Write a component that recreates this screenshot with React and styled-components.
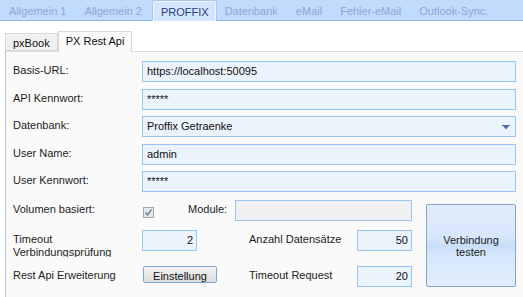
import React from "react";
import styled, { createGlobalStyle } from "styled-components";

const GlobalStyle = createGlobalStyle`
  html, body {
    margin: 0;
    padding: 0;
    background: #ffffff;
  }
  body {
    font-family: "Liberation Sans", Arial, sans-serif;
    font-size: 11px;
    color: #1c1c1c;
  }
`;

const topTabs = [
  "Allgemein 1",
  "Allgemein 2",
  "PROFFIX",
  "Datenbank",
  "eMail",
  "Fehler-eMail",
  "Outlook-Sync.",
];

const fields = [
  { label: "Basis-URL:", value: "https://localhost:50095" },
  { label: "API Kennwort:", value: "*****" },
  { label: "Datenbank:", value: "Proffix Getraenke", combo: true },
  { label: "User Name:", value: "admin" },
  { label: "User Kennwort:", value: "*****" },
];

const App = () => {
  return (
    <Window>
      <GlobalStyle />
      <TopTabBar>
        {topTabs.map((t) => (
          <TopTab key={t} $active={t === "PROFFIX"}>
            {t}
          </TopTab>
        ))}
      </TopTabBar>
      <OuterPage>
        <SubTabBar>
          <SubTab>pxBook</SubTab>
          <SubTab $active>PX Rest Api</SubTab>
        </SubTabBar>
        <Panel>
          <FieldList>
            {fields.map((f) => (
              <FieldRow key={f.label}>
                <Label>{f.label}</Label>
                <TextBox>
                  {f.value}
                  {f.combo && (
                    <ComboArrow width="8" height="5" viewBox="0 0 8 5">
                      <path d="M0 0h8v1H7L4 4.5 1 1H0z" fill="#4d6fa6" />
                    </ComboArrow>
                  )}
                </TextBox>
              </FieldRow>
            ))}
          </FieldList>
          <Lower>
            <LowerFields>
              <LowerRow>
                <Label>Volumen basiert:</Label>
                <CheckBox width="11" height="11" viewBox="0 0 11 11">
                  <rect x="0.5" y="0.5" width="10" height="10" fill="#e9e9e9" stroke="#a9a9a9" />
                  <path d="M2.5 5.5l2 2.2 4-5" fill="none" stroke="#7286ad" strokeWidth="1.6" />
                </CheckBox>
                <InlineLabel $gap={34}>Module:</InlineLabel>
                <TextBox $disabled $grow />
              </LowerRow>
              <LowerRow $top={9}>
                <WrapLabel>Timeout Verbindungsprüfung</WrapLabel>
                <NumberBox>2</NumberBox>
                <InlineLabel $gap={52} $grow>
                  Anzahl Datensätze
                </InlineLabel>
                <NumberBox>50</NumberBox>
              </LowerRow>
              <LowerRow $top={15}>
                <Label>Rest Api Erweiterung</Label>
                <SmallButton>Einstellung</SmallButton>
                <InlineLabel $gap={32} $grow>
                  Timeout Request
                </InlineLabel>
                <NumberBox>20</NumberBox>
              </LowerRow>
            </LowerFields>
            <BigButton>
              Verbindung
              <br />
              testen
            </BigButton>
          </Lower>
        </Panel>
      </OuterPage>
    </Window>
  );
};

export default App;

const Window = styled.div`
  width: 523px;
  height: 297px;
  display: flex;
  flex-direction: column;
  overflow: hidden;
  background: #ffffff;
`;

const TopTabBar = styled.div`
  display: flex;
  align-items: flex-end;
  height: 21px;
  box-sizing: border-box;
  background: #c1dbfd;
  border-bottom: 1px solid #93b6e6;
`;

const TopTab = styled.div`
  box-sizing: border-box;
  height: ${(p) => (p.$active ? "20px" : "19px")};
  margin: ${(p) => (p.$active ? "0 0 -1px 2px" : "0")};
  padding: ${(p) => (p.$active ? "3px 6px 0 7px" : "3px 9px 0 9px")};
  line-height: 15px;
  white-space: nowrap;
  color: ${(p) => (p.$active ? "#2c3b7c" : "#8ea6d0")};
  background: ${(p) => (p.$active ? "#d3e5fd" : "transparent")};
  border: ${(p) => (p.$active ? "1px solid #eef5ff" : "none")};
  border-bottom: none;
  border-radius: ${(p) => (p.$active ? "2px 2px 0 0" : "0")};
  box-shadow: ${(p) => (p.$active ? "0 0 0 1px #a9c6ee" : "none")};
`;

const OuterPage = styled.div`
  flex: 1;
  display: flex;
  flex-direction: column;
  background: #ffffff;
`;

const SubTabBar = styled.div`
  display: flex;
  align-items: flex-end;
  height: 30px;
  padding-left: 5px;
`;

const SubTab = styled.div`
  position: relative;
  z-index: 1;
  box-sizing: border-box;
  height: ${(p) => (p.$active ? "21px" : "18px")};
  margin-bottom: ${(p) => (p.$active ? "-1px" : "0")};
  padding: 3px 7px 0 7px;
  line-height: 13px;
  color: #111111;
  background: ${(p) => (p.$active ? "#fafafa" : "#f0f0f0")};
  border: 1px solid #d9d9d9;
  border-bottom: ${(p) => (p.$active ? "none" : "1px solid #d9d9d9")};
`;

const Panel = styled.div`
  flex: 1;
  background: #fafafa;
  border-top: 1px solid #dadada;
  border-left: 1px solid #b7c4da;
  padding: 9px 7px 0 7px;
  margin-left: 5px;
`;

const FieldList = styled.div`
  display: flex;
  flex-direction: column;
  gap: 6.5px;
`;

const FieldRow = styled.div`
  display: grid;
  grid-template-columns: 129px 1fr;
  height: 21px;
`;

const Label = styled.div`
  width: 129px;
  flex: none;
  padding-top: 3px;
  line-height: 13px;
  white-space: nowrap;
  color: #1c1c1c;
`;

const TextBox = styled.div`
  position: relative;
  box-sizing: border-box;
  height: 21px;
  flex: ${(p) => (p.$grow ? "1" : "none")};
  margin-left: ${(p) => (p.$grow ? "8px" : "0")};
  padding: 3px 4px 0 4px;
  line-height: 13px;
  color: #111111;
  background: ${(p) => (p.$disabled ? "#f0f0f0" : "#ebf3fd")};
  border: 1px solid #98c6f4;
`;

const ComboArrow = styled.svg`
  position: absolute;
  right: 5px;
  top: 8px;
`;

const Lower = styled.div`
  display: flex;
  margin-top: 8px;
`;

const LowerFields = styled.div`
  width: 399px;
  display: flex;
  flex-direction: column;
`;

const LowerRow = styled.div`
  display: flex;
  align-items: flex-start;
  height: 21px;
  margin-top: ${(p) => p.$top || 0}px;
`;

const CheckBox = styled.svg`
  flex: none;
  margin: 7px 0 0 1px;
`;

const InlineLabel = styled.div`
  flex: ${(p) => (p.$grow ? "1" : "none")};
  margin-left: ${(p) => p.$gap}px;
  padding-top: 3px;
  line-height: 13px;
  white-space: nowrap;
`;

const WrapLabel = styled.div`
  width: 125px;
  margin-right: 4px;
  flex: none;
  height: 24px;
  margin-top: 3px;
  line-height: 13px;
  overflow: hidden;
`;

const NumberBox = styled.div`
  box-sizing: border-box;
  width: 55px;
  height: 21px;
  flex: none;
  padding: 3px 3px 0 4px;
  line-height: 13px;
  text-align: right;
  color: #111111;
  background: #ebf3fd;
  border: 1px solid #98c6f4;
`;

const SmallButton = styled.div`
  box-sizing: border-box;
  width: 74px;
  height: 17px;
  margin-left: 1px;
  flex: none;
  padding-top: 3px;
  line-height: 13px;
  text-align: center;
  overflow: hidden;
  color: #111111;
  background: linear-gradient(#f4f4f4, #e9e9e9 50%, #dcdcdc);
  border: 1px solid #7ea6dc;
  border-radius: 2px;
`;

const BigButton = styled.div`
  box-sizing: border-box;
  width: 90px;
  height: 83px;
  margin: 4px 0 0 14px;
  display: flex;
  align-items: center;
  justify-content: center;
  text-align: center;
  line-height: 12px;
  color: #1c1c1c;
  background: linear-gradient(
    #e0ecfb,
    #d8e7fb 40%,
    #c8ddf8 50%,
    #d6e7fc 62%,
    #e1eefd
  );
  border: 1px solid #87a4cf;
  border-radius: 2px;
`;
